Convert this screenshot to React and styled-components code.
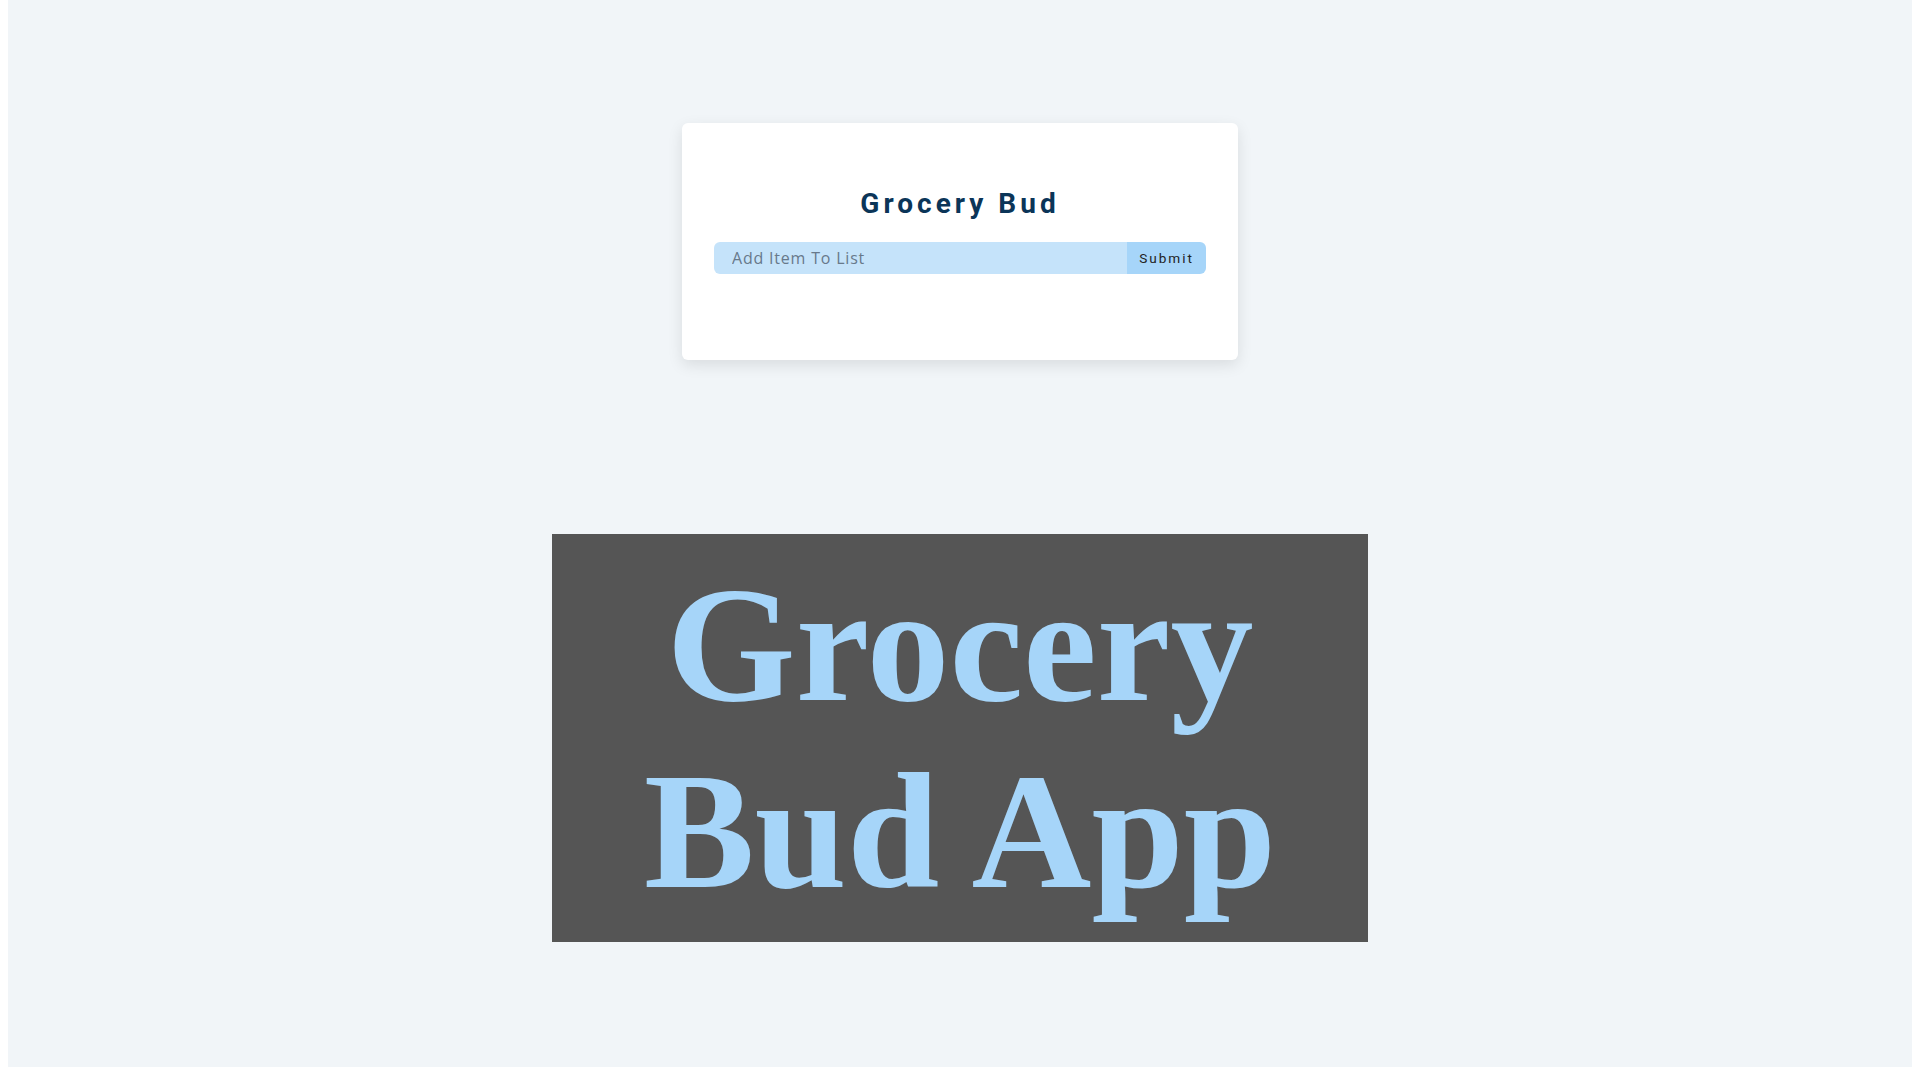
import styled, { createGlobalStyle } from "styled-components";

const GlobalStyle = createGlobalStyle`
  * {
    box-sizing: border-box;
  }
  html {
    background: #ffffff;
  }
  body {
    margin: 0 8px 13px;
    font-family: Roboto, "Liberation Sans", sans-serif;
  }
`;

function App() {
  return (
    <>
      <GlobalStyle />
      <Main>
        <Card>
          <Title>Grocery Bud</Title>
          <Form onSubmit={(e) => e.preventDefault()}>
            <Input type="text" placeholder="Add Item To List" />
            <SubmitButton type="submit">Submit</SubmitButton>
          </Form>
        </Card>
        <Banner>
          <BannerText>Grocery Bud App</BannerText>
        </Banner>
      </Main>
    </>
  );
}

export default App;

const Main = styled.main`
  display: flex;
  flex-direction: column;
  align-items: center;
  min-height: 1067px;
  padding-top: 123px;
  background: #f1f5f8;
`;
const Card = styled.section`
  width: 556px;
  padding: 63px 32px 86px;
  background: #ffffff;
  border-radius: 6px;
  box-shadow: 0 5px 15px rgb(0 0 0 / 10%);
`;
const Title = styled.h3`
  margin: 0 0 21px;
  font-size: 28px;
  line-height: 35px;
  font-weight: 700;
  letter-spacing: 4px;
  text-align: center;
  color: #0b3558;
`;
const Form = styled.form`
  display: flex;
  height: 32px;
  border-radius: 6px;
  overflow: hidden;
`;
const Input = styled.input`
  flex: 1;
  min-width: 0;
  padding: 0 18px;
  border: none;
  outline: none;
  background: #c5e3fa;
  font-family: "Open Sans", sans-serif;
  font-size: 16px;
  letter-spacing: 0.8px;
  color: #102a42;
  &::placeholder {
    color: #68798b;
  }
`;
const SubmitButton = styled.button`
  padding: 0 12px;
  border: none;
  background: #a6d5f9;
  font-family: Roboto, sans-serif;
  font-size: 13.6px;
  letter-spacing: 2px;
  color: #222222;
  cursor: pointer;
`;
const Banner = styled.div`
  width: 816px;
  margin-top: 174px;
  padding: 17px 0;
  background: #555555;
`;
const BannerText = styled.h1`
  margin: 0;
  font-family: "Liberation Serif", "Times New Roman", serif;
  font-size: 166px;
  font-weight: 700;
  line-height: 187px;
  text-align: center;
  color: #a6d5f9;
`;
